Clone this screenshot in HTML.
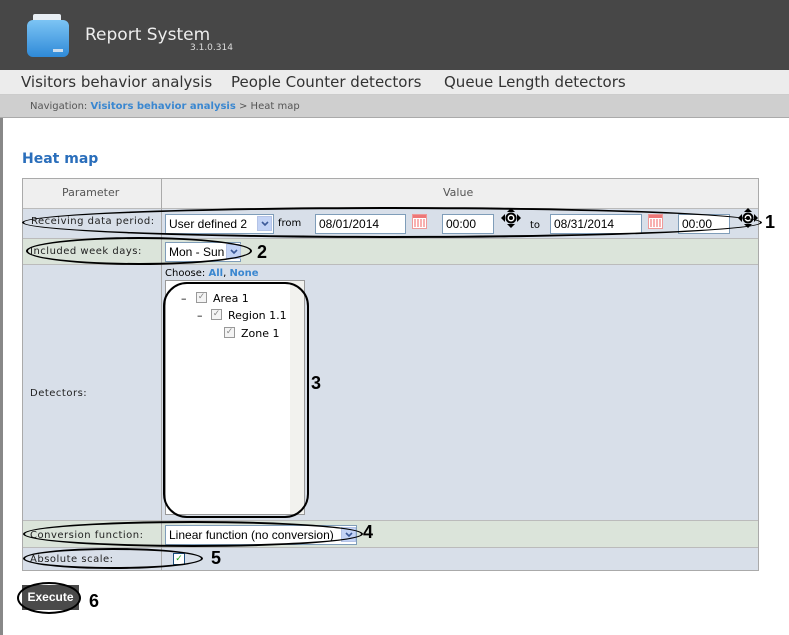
<!DOCTYPE html><html><head><style>
*{margin:0;padding:0;box-sizing:border-box}
body{width:789px;height:635px;background:#fff;font-family:Verdana,"DejaVu Sans",sans-serif;position:relative;overflow:hidden}
.a{position:absolute}
.inp{position:absolute;background:#fff;border:1px solid #7f9db9;font-family:"Liberation Sans",Arial,sans-serif;font-size:12px;padding:2px 3px;height:20px;white-space:nowrap}
.dd{position:absolute;width:15px;height:15px;background:#c3d3f5;border:1px solid #b4c3e6}
.dd svg{position:absolute;left:3px;top:4px}
.lbl{position:absolute;font-size:10px;color:#222;letter-spacing:0.5px}
.ell{position:absolute;border:2.5px solid #000;border-radius:50%}
.num{position:absolute;font-family:"Liberation Sans",Arial,sans-serif;font-weight:bold;font-size:18px;color:#000}
.cb{position:absolute;width:11px;height:11px;border:1px solid #999;background:#f4f4f4;color:#888;font-size:9px;line-height:9px;text-align:center}
.tr{position:absolute;font-size:11px;color:#000}
.cal{position:absolute;width:15px;height:15px;border:1px solid #e99;background:#fff}
.cal:before{content:"";position:absolute;left:0;top:0;right:0;height:3px;background:#e77}
.cal:after{content:"";position:absolute;left:1px;top:4px;right:1px;bottom:1px;background:repeating-linear-gradient(90deg,#f8b0b0 0 2px,#fff 2px 3px)}
</style></head><body>
<div class="a" style="left:0;top:0;width:789px;height:70px;background:#474747"></div>
<div class="a" style="left:33px;top:14px;width:28px;height:10px;background:#e8eef4;border-radius:2px"></div>
<div class="a" style="left:27px;top:20px;width:42px;height:37px;background:linear-gradient(#7cc4f4,#2f8ad8);border-radius:6px"></div>
<div class="a" style="left:53px;top:49px;width:10px;height:3px;background:#cde"></div>
<div class="a" style="left:85px;top:25px;color:#eee;font-size:17px">Report System</div>
<div class="a" style="left:190px;top:43px;color:#ddd;font-size:9px">3.1.0.314</div>
<div class="a" style="left:0;top:70px;width:789px;height:25px;background:#ececec;border-bottom:1px solid #ccc"></div>
<div class="a" style="left:21px;top:73px;font-size:15px;color:#333">Visitors behavior analysis</div>
<div class="a" style="left:231px;top:73px;font-size:15px;color:#333">People Counter detectors</div>
<div class="a" style="left:444px;top:73px;font-size:15px;color:#333">Queue Length detectors</div>
<div class="a" style="left:0;top:95px;width:789px;height:23px;background:#cfcfcf;border-bottom:1px solid #aaa"></div>
<div class="a" style="left:30px;top:101px;font-size:10px;color:#555">Navigation: <b style="color:#3a87d0">Visitors behavior analysis</b> &gt; Heat map</div>
<div class="a" style="left:0;top:118px;width:3px;height:517px;background:#888"></div>
<div class="a" style="left:22px;top:151px;font-size:14px;font-weight:bold;color:#2a6ebb">Heat map</div>
<div class="a" style="left:22px;top:178px;width:737px;height:393px;border:1px solid #aaa;background:#d8dfe9"></div>
<div class="a" style="left:23px;top:179px;width:735px;height:29px;background:#efefef"></div>
<div class="a" style="left:23px;top:238px;width:735px;height:27px;background:#dbe4da;border-top:1px solid #bbb;border-bottom:1px solid #bbb"></div>
<div class="a" style="left:23px;top:520px;width:735px;height:28px;background:#dbe4da;border-top:1px solid #bbb;border-bottom:1px solid #bbb"></div>
<div class="a" style="left:23px;top:208px;width:735px;height:1px;background:#bbb"></div>
<div class="a" style="left:161px;top:179px;width:1px;height:391px;background:#aaa"></div>
<div class="a" style="left:62px;top:186px;font-size:11px;color:#555">Parameter</div>
<div class="a" style="left:443px;top:186px;font-size:11px;color:#555">Value</div>
<div class="lbl" style="left:31px;top:216px">Receiving data period:</div>
<div class="lbl" style="left:30px;top:246px">Included week days:</div>
<div class="lbl" style="left:30px;top:388px">Detectors:</div>
<div class="lbl" style="left:30px;top:530px">Conversion function:</div>
<div class="lbl" style="left:30px;top:554px">Absolute scale:</div>
<div class="inp" style="left:165px;top:214px;width:109px">User defined 2</div><div class="dd" style="left:257px;top:216px"><svg width="8" height="6"><path d="M1 1L4 4L7 1" stroke="#3c5a99" stroke-width="1.6" fill="none"/></svg></div>
<div class="a" style="left:278px;top:218px;font-size:10px">from</div>
<div class="inp" style="left:315px;top:214px;width:91px">08/01/2014</div>
<div class="cal" style="left:412px;top:214px"></div>
<div class="inp" style="left:442px;top:214px;width:52px">00:00</div>
<svg class="a" style="left:501px;top:208px" width="20" height="20" viewBox="0 0 20 20"><path d="M10 0L14 4H6Z M10 20L14 16H6Z M0 10L4 6V14Z M20 10L16 6V14Z" fill="#000"/><circle cx="10" cy="10" r="5.5" fill="#000"/><circle cx="10" cy="10" r="3.5" fill="#fff"/><circle cx="10" cy="10" r="2" fill="#000"/></svg>
<div class="a" style="left:530px;top:220px;font-size:10px">to</div>
<div class="inp" style="left:550px;top:214px;width:92px">08/31/2014</div>
<div class="cal" style="left:648px;top:214px"></div>
<div class="inp" style="left:678px;top:214px;width:52px">00:00</div>
<svg class="a" style="left:738px;top:208px" width="20" height="20" viewBox="0 0 20 20"><path d="M10 0L14 4H6Z M10 20L14 16H6Z M0 10L4 6V14Z M20 10L16 6V14Z" fill="#000"/><circle cx="10" cy="10" r="5.5" fill="#000"/><circle cx="10" cy="10" r="3.5" fill="#fff"/><circle cx="10" cy="10" r="2" fill="#000"/></svg>
<div class="inp" style="left:165px;top:242px;width:76px">Mon - Sun</div><div class="dd" style="left:226px;top:244px"><svg width="8" height="6"><path d="M1 1L4 4L7 1" stroke="#3c5a99" stroke-width="1.6" fill="none"/></svg></div>
<div class="a" style="left:165px;top:268px;font-size:10px">Choose: <b style="color:#3a87d0">All</b>, <b style="color:#3a87d0">None</b></div>
<div class="a" style="left:165px;top:280px;width:140px;height:235px;background:#fff;border:1px solid #999"></div>
<div class="a" style="left:290px;top:281px;width:14px;height:233px;background:#f2f2ee"></div>
<div class="tr" style="left:181px;top:292px">–</div><div class="cb" style="left:196px;top:292px">✓</div><div class="tr" style="left:213px;top:292px">Area 1</div>
<div class="tr" style="left:197px;top:309px">–</div><div class="cb" style="left:211px;top:309px">✓</div><div class="tr" style="left:228px;top:309px">Region 1.1</div>
<div class="cb" style="left:224px;top:327px">✓</div><div class="tr" style="left:241px;top:327px">Zone 1</div>
<div class="inp" style="left:165px;top:525px;width:192px">Linear function (no conversion)</div><div class="dd" style="left:341px;top:527px"><svg width="8" height="6"><path d="M1 1L4 4L7 1" stroke="#3c5a99" stroke-width="1.6" fill="none"/></svg></div>
<div class="a" style="left:173px;top:553px;width:12px;height:12px;border:1px solid #1c5180;background:#fff;color:#2a2;font-size:9px;line-height:10px;text-align:center">✓</div>
<div class="a" style="left:22px;top:585px;width:57px;height:25px;background:#4a4a4a;color:#fff;font-family:'Liberation Sans',Arial,sans-serif;font-weight:bold;font-size:12px;text-align:center;line-height:25px">Execute</div>
<div class="ell" style="left:22px;top:207px;width:740px;height:31px"></div>
<div class="ell" style="left:26px;top:237px;width:226px;height:28px"></div>
<div class="ell" style="left:163px;top:282px;width:146px;height:236px;border-radius:24px"></div>
<div class="ell" style="left:23px;top:521px;width:340px;height:26px"></div>
<div class="ell" style="left:23px;top:548px;width:180px;height:21px"></div>
<div class="ell" style="left:17px;top:582px;width:64px;height:32px"></div>
<div class="num" style="left:765px;top:212px">1</div>
<div class="num" style="left:257px;top:242px">2</div>
<div class="num" style="left:311px;top:373px">3</div>
<div class="num" style="left:363px;top:522px">4</div>
<div class="num" style="left:211px;top:548px">5</div>
<div class="num" style="left:89px;top:591px">6</div>
</body></html>
